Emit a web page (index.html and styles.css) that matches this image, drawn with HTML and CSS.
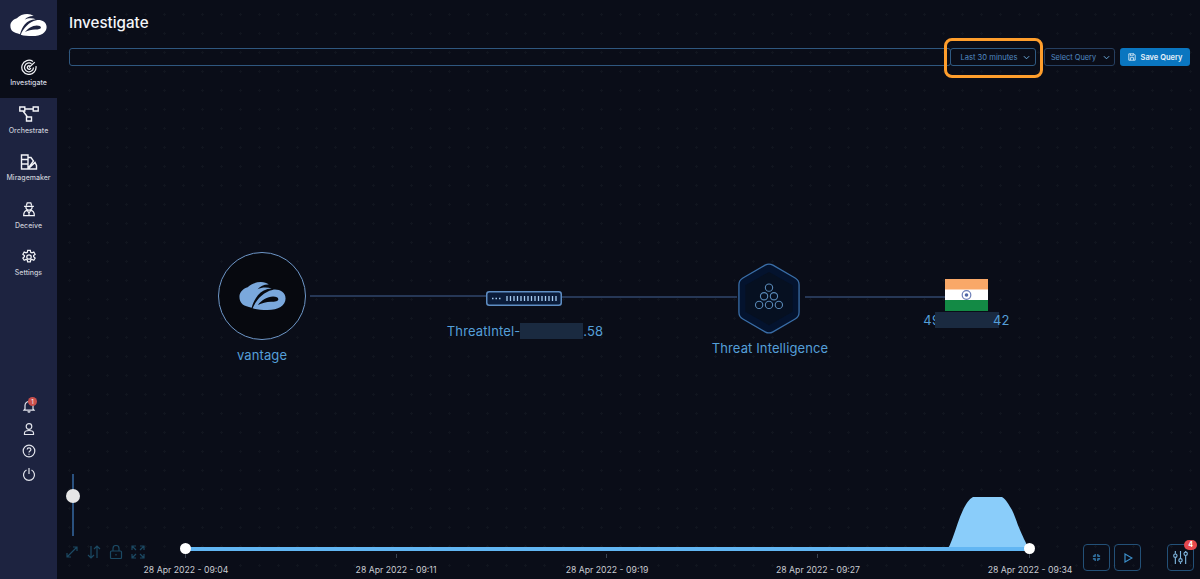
FILE: index.html
```html
<!DOCTYPE html>
<html lang="en">
<head>
<meta charset="utf-8">
<title>Investigate</title>
<link rel="stylesheet" href="styles.css">
</head>
<body>
<svg class="defs" width="0" height="0" aria-hidden="true">
  <defs>
    <symbol id="logo" viewBox="0 0 140 85">
      <path d="M0 45C0 30 12 20 25 16 35 6 50 0 65 0 75 0 83 3 90 8 76 7 64 12 55 22 68 15 85 15 98 20 80 21 66 28 56 40 48 50 42 62 37 78 26 74 16 73 10 68 3 62 0 55 0 45z"/>
      <path fill-rule="evenodd" d="M40 80C50 55 72 30 100 24 118 20 140 30 140 50 140 72 118 85 85 85 68 85 52 84 40 80zM56 70C68 64 82 60 96 60 108 60 118 58 118 52 118 47 112 44 102 44 85 44 66 56 56 70z"/>
    </symbol>
  </defs>
</svg>
<div class="app">
  <aside class="sidebar">
    <div class="brand"><svg class="brand-logo"><use href="#logo"/></svg></div>
    <nav class="nav">
      <a class="nav-item active">
        <svg class="nav-icon" viewBox="0 0 20 18"><path d="M14.500 2.800A8 8 0 1 0 17.800 8M12.800 5.300A5 5 0 1 0 15 9.500M10.800 7.700A2 2 0 1 0 12 10.200M10 9.500 16.500 3.500"/></svg>
        <span>Investigate</span>
      </a>
      <a class="nav-item">
        <svg class="nav-icon" viewBox="0 0 20 16"><path d="M.8 1h5v4h-5zM14.200 1h5v4h-5zM7.500 11h5v4h-5zM5.800 3h8.400M4 5l4.500 6"/></svg>
        <span>Orchestrate</span>
      </a>
      <a class="nav-item">
        <svg class="nav-icon" viewBox="0 0 20 16"><path d="M2.500 1h6.500v14H2.500zM2.500 5.500H9M2.500 10H9M9 3.500h3l2.500 3.500L9 14.500M9 15l7-6.500 1.500 3V15z"/></svg>
        <span>Miragemaker</span>
      </a>
      <a class="nav-item">
        <svg class="nav-icon" viewBox="0 0 20 18"><path d="M7 5 8 2h4l1 3M4.500 6h11M6.500 6.500c0 2.300 1.500 3.800 3.500 3.800s3.500-1.500 3.500-3.800M4 16.500c0-3.700 1.500-5.700 4-6l2 3 2-3c2.500.3 4 2.300 4 6zM10 13.500v3"/></svg>
        <span>Deceive</span>
      </a>
      <a class="nav-item">
        <svg class="nav-icon" viewBox="0 0 20 18"><circle cx="10" cy="9" r="2.500"/><path d="M8.500 1.500h3l.4 2.200 1.500.7 2-1 1.500 2.500-1.700 1.400v1.500l1.700 1.400-1.500 2.500-2-1-1.500.7-.4 2.100h-3l-.4-2.100-1.500-.7-2 1-1.500-2.500 1.700-1.400V7.300L3.100 5.900l1.500-2.500 2 1 1.500-.7z"/></svg>
        <span>Settings</span>
      </a>
    </nav>
    <div class="util">
      <div class="util-item">
        <svg class="util-icon" viewBox="0 0 14 14"><path d="M3 10V6.500a4 4 0 0 1 8 0V10l1 1.200H2zM5.800 12.300a1.300 1.300 0 0 0 2.400 0"/></svg>
        <span class="bell-badge">1</span>
      </div>
      <div class="util-item"><svg class="util-icon" viewBox="0 0 14 14"><circle cx="7" cy="4.500" r="2.800"/><path d="M2.500 12.500v-1.500c0-1.500 1.500-2.500 4.500-2.500s4.500 1 4.500 2.500v1.500z"/></svg></div>
      <div class="util-item"><svg class="util-icon" viewBox="0 0 14 14"><circle cx="7" cy="7" r="5.800"/><path d="M5.200 5.600C5.200 4.500 6 3.900 7 3.900s1.900.6 1.900 1.600C8.900 7 7 7 7 8.500M7 9.800v1"/></svg></div>
      <div class="util-item"><svg class="util-icon" viewBox="0 0 14 14"><path d="M4.500 3a5.500 5.500 0 1 0 5 0M7 1v6"/></svg></div>
    </div>
  </aside>

  <main class="main">
    <h1 class="title">Investigate</h1>
    <div class="query">
      <div class="query-input"></div>
      <div class="time-wrap">
        <button class="select time">Last 30 minutes<svg class="chev" viewBox="0 0 8 5"><path d="M1 1l3 3 3-3"/></svg></button>
      </div>
      <button class="select saved">Select Query<svg class="chev" viewBox="0 0 8 5"><path d="M1 1l3 3 3-3"/></svg></button>
      <button class="save">
        <svg class="save-icon" viewBox="0 0 10 10"><path d="M1 1h6.500L9 2.500V9H1zM3 1v2.500h3.500V1M3 9V5.800h4V9"/></svg>
        Save Query
      </button>
    </div>

    <section class="graph">
      <svg class="edges" width="1143" height="579">
        <path d="M253 296H430M505 297H680M748 297H888"/>
      </svg>

      <div class="node vantage">
        <div class="disc"><svg class="disc-logo"><use href="#logo"/></svg></div>
        <span class="node-label">vantage</span>
      </div>

      <div class="node intel-ip">
        <svg class="device" viewBox="0 0 76 15">
          <rect x=".75" y=".75" width="74.500" height="13.500" rx="2.500" class="dev-box"/>
          <path class="dev-dots" d="M6 7.500h1.500M9.500 7.500H11M13 7.500h1.500"/>
          <path class="dev-bars" d="M21 5v5M24.500 5v5M28 5v5M31.500 5v5M35 5v5M38.500 5v5M42 5v5M45.500 5v5M49 5v5M52.500 5v5M56 5v5M59.500 5v5M63 5v5M66.500 5v5M70 5v5"/>
        </svg>
        <span class="node-label ip-label">ThreatIntel-<span class="mask mask-a"></span>.58</span>
      </div>

      <div class="node intel">
        <svg class="hex" viewBox="0 0 64 72">
          <path class="hex-outer" d="M28 2.200a8 8 0 0 1 8 0l22.500 13a8 8 0 0 1 4 6.900v27.800a8 8 0 0 1-4 6.900l-22.500 13a8 8 0 0 1-8 0l-22.500-13a8 8 0 0 1-4-6.900V22.100a8 8 0 0 1 4-6.900z"/>
          <path class="hex-inner" d="M32 9 56 22.500v27L32 63 8 49.500v-27z"/>
          <g class="hex-dots">
            <circle cx="32" cy="25" r="3.700"/><circle cx="27" cy="33.700" r="3.700"/><circle cx="37" cy="33.700" r="3.700"/>
            <circle cx="22" cy="42.500" r="3.700"/><circle cx="32" cy="42.500" r="3.700"/><circle cx="42" cy="42.500" r="3.700"/>
          </g>
        </svg>
        <span class="node-label intel-label">Threat Intelligence</span>
      </div>

      <div class="node geo">
        <svg class="flag" viewBox="0 0 43 32">
          <rect width="43" height="11" fill="#f9a868"/>
          <rect y="10.500" width="43" height="11" fill="#fff"/>
          <rect y="21" width="43" height="11" fill="#138a45"/>
          <circle cx="21.500" cy="16" r="4.300" fill="none" stroke="#6d7fb8" stroke-width="1.200"/>
          <circle cx="21.500" cy="16" r="1.800" fill="#5066a6"/>
        </svg>
        <span class="node-label geo-label">49<span class="mask mask-b"></span>42</span>
      </div>
    </section>

    <div class="zoom-rail"><span class="zoom-knob"></span></div>
    <div class="tools">
      <svg class="tool" viewBox="0 0 14 14"><path d="M2 12 12 2M8 2h4v4M2 8v4h4"/></svg>
      <svg class="tool" viewBox="0 0 14 14"><path d="M4 1v12M1 10l3 3 3-3M10 13V1M7 4l3-3 3 3"/></svg>
      <svg class="tool" viewBox="0 0 14 14"><rect x="1.500" y="6" width="11" height="7.500" rx="1"/><path d="M4 6V3.500a3 3 0 0 1 6 0V6M7 9v1.500"/></svg>
      <svg class="tool" viewBox="0 0 14 14"><path d="M1 5V1h4M1 1l4 4M13 5V1H9M13 1 9 5M1 9v4h4M1 13l4-4M13 9v4H9M13 13 9 9"/></svg>
    </div>

    <section class="timeline">
      <svg class="peak" viewBox="0 0 86 54"><path d="M0 54C4 52 6 45 8 40 11 32 14 21 18 13 21 7 24 2 28 0H57C61 2 64 8 67 13 70 19 72 26 75 33 78 40 80 44 83 50L86 54z"/></svg>
      <div class="track"></div>
      <span class="thumb thumb-l"></span>
      <span class="thumb thumb-r"></span>
      <span class="tick t1"></span><span class="tick t2"></span><span class="tick t3"></span><span class="tick t4"></span><span class="tick t5"></span>
      <span class="stamp s1">28 Apr 2022 - 09:04</span>
      <span class="stamp s2">28 Apr 2022 - 09:11</span>
      <span class="stamp s3">28 Apr 2022 - 09:19</span>
      <span class="stamp s4">28 Apr 2022 - 09:27</span>
      <span class="stamp s5">28 Apr 2022 - 09:34</span>
    </section>

    <div class="controls">
      <button class="ctrl">
        <svg class="ctrl-icon" viewBox="0 0 10 10"><path d="M3.500 1v2.500H1M6.500 1v2.500H9M3.500 9V6.500H1M6.500 9V6.500H9"/></svg>
      </button>
      <button class="ctrl">
        <svg class="ctrl-icon play" viewBox="0 0 10 10"><path d="M2 1v8l7-4z"/></svg>
      </button>
      <button class="ctrl filter">
        <svg class="ctrl-icon mixer" viewBox="0 0 16 16"><path d="M2.500 1v3M2.500 8v7M8 1v8M8 13v2M13.500 1v1M13.500 6v9"/><circle cx="2.500" cy="6" r="1.800"/><circle cx="8" cy="11" r="1.800"/><circle cx="13.500" cy="4" r="1.800"/></svg>
        <span class="filter-badge">4</span>
      </button>
    </div>
  </main>
</div>
</body>
</html>
```
FILE: styles.css
```css
* { box-sizing: border-box; }
html, body { margin: 0; height: 100%; }
body {
  width: 1200px;
  height: 579px;
  overflow: hidden;
  background: #0a0d18;
  font-family: Inter, "Liberation Sans", sans-serif;
  color: #fff;
}
.defs { position: absolute; }
.app { display: flex; height: 579px; }

/* Sidebar */
.sidebar {
  width: 57px;
  flex: none;
  display: flex;
  flex-direction: column;
  background: #1d2340;
}
.brand { height: 50px; display: flex; align-items: center; justify-content: center; }
.brand-logo { width: 37px; height: 22px; fill: #fff; }
.nav { display: flex; flex-direction: column; }
.nav-item {
  height: 47.500px;
  display: flex;
  flex-direction: column;
  align-items: center;
  padding-top: 8.500px;
  gap: 3.500px;
  font-size: 7px;
  line-height: 9px;
  font-weight: 500;
  color: #c9ccd6;
  white-space: nowrap;
}
.nav-item.active { background: #0a0d18; color: #d6d9e2; }
.nav-icon { width: 20px; height: 16px; fill: none; stroke: #f2f3f7; stroke-width: 1.400; }
.util { margin-top: auto; margin-bottom: 97px; display: flex; flex-direction: column; align-items: center; gap: 6.700px; }
.util-item { position: relative; width: 16px; height: 16px; display: flex; align-items: center; justify-content: center; }
.util-icon { width: 14px; height: 14px; fill: none; stroke: #e2e4ec; stroke-width: 1.200; }
.bell-badge {
  position: absolute;
  top: -.5px;
  right: -.5px;
  width: 9px;
  height: 9px;
  border-radius: 50%;
  background: #c9504d;
  font-size: 6px;
  line-height: 9px;
  text-align: center;
  color: #fff;
}

/* Main */
.main {
  position: relative;
  flex: 1;
  padding: 0 10px 0 12px;
  background-color: #0a0d18;
  background-image: radial-gradient(circle, #11151f 1px, transparent 1.300px);
  background-size: 19px 19px;
  background-position: 3px 5px;
}
.title { margin: 0; padding-top: 13px; height: 48px; font-size: 15.200px; font-weight: 500; line-height: 20px; color: #f4f5f8; }
.query { display: flex; align-items: center; height: 18px; }
.query-input { flex: 1; height: 18px; border: 1px solid #2f577f; border-radius: 3px; margin-right: -1px; }
.time-wrap {
  position: relative;
  display: flex;
  z-index: 1;
}
.time-wrap::after {
  content: "";
  position: absolute;
  inset: -10px -7px -12px -6px;
  border: 3px solid #ff9e2c;
  border-radius: 8px;
  background: transparent;
}
.select {
  height: 18px;
  display: flex;
  align-items: center;
  justify-content: center;
  background: #0a0d18;
  border: 1px solid #2f5a82;
  border-radius: 3px;
  color: #5189c0;
  font: 400 7.600px Inter, "Liberation Sans", sans-serif;
  white-space: nowrap;
  padding: 0;
}
.time { width: 86px; gap: 5px; padding-left: 4px; }
.saved { width: 71px; gap: 7px; margin-left: 8px; padding-left: 2px; border-color: #263f60; font-size: 7.400px; }
.chev { width: 7px; height: 5px; fill: none; stroke: #6fb0e3; stroke-width: 1.100; }
.save {
  width: 70px;
  height: 18px;
  margin-left: 5px;
  display: flex;
  align-items: center;
  justify-content: center;
  gap: 5px;
  padding: 0;
  border: 0;
  border-radius: 3px;
  background: #0a76c0;
  color: #e8f2fa;
  font: 600 7.500px Inter, "Liberation Sans", sans-serif;
  white-space: nowrap;
}
.save-icon { width: 8px; height: 8px; fill: none; stroke: #e8f2fa; stroke-width: 1; }

/* Graph canvas */
.graph { position: absolute; inset: 0; pointer-events: none; }
.edges { position: absolute; left: 0; top: 0; }
.edges path { fill: none; stroke: #31456b; stroke-width: 1.500; }
.node { position: absolute; display: flex; flex-direction: column; align-items: center; }
.node-label { font-size: 13px; line-height: 17px; color: #559fd8; white-space: nowrap; letter-spacing: .12px; }
.vantage { left: 161px; top: 252px; width: 88px; }
.disc {
  width: 88px;
  height: 88px;
  border-radius: 50%;
  border: 1.500px solid #6e97c8;
  background: #07090f;
  display: flex;
  align-items: center;
  justify-content: center;
  margin-bottom: 7px;
}
.disc-logo { width: 47px; height: 28px; fill: #7aa8dc; }
.intel-ip { left: 389px; top: 291px; width: 156px; }
.device { width: 76px; height: 15px; margin-bottom: 17px; }
.ip-label { margin-left: 2px; }
.dev-box { fill: #0b1c3a; stroke: #5f8ec4; stroke-width: 1.500; }
.dev-dots, .dev-bars { fill: none; stroke: #a6cbf0; stroke-width: 1.500; }
.dev-bars { stroke-width: 1.300; }
.mask { display: inline-block; height: 16px; background: #1a2a40; vertical-align: -3px; }
.mask-a { width: 63px; }
.intel { left: 652px; top: 263px; width: 120px; }
.hex { width: 64px; height: 71px; margin-bottom: 6px; }
.intel-label { margin-left: 2px; }
.hex-outer { fill: #04132e; stroke: #3a6ea8; stroke-width: 1.300; }
.hex-inner { fill: #061021; }
.hex-dots circle { fill: none; stroke: #5a8ab8; stroke-width: 1.100; }
.geo { left: 867px; top: 279px; width: 85px; }
.flag { width: 43px; height: 32px; display: block; }
.geo-label { margin-top: 1px; }
.mask-b { width: 64px; margin: 0 -5.500px; }

/* Zoom */
.zoom-rail { position: absolute; left: 15px; top: 474px; width: 2px; height: 62px; background: #2a517f; }
.zoom-knob {
  position: absolute;
  left: -6px;
  top: 15px;
  width: 14px;
  height: 14px;
  border-radius: 50%;
  background: #e6e6e6;
}
.tools { position: absolute; left: 8px; top: 545px; display: flex; gap: 8px; }
.tool { width: 14px; height: 14px; fill: none; stroke: #1b4963; stroke-width: 1.200; }

/* Timeline */
.timeline { position: absolute; left: 0; right: 0; top: 490px; height: 89px; }
.peak { position: absolute; left: 888px; top: 7px; width: 86px; height: 54px; fill: #8acdfa; }
.track { position: absolute; left: 128px; right: 170px; top: 57px; height: 4px; background: #62b6f3; border-radius: 2px; }
.thumb {
  position: absolute;
  top: 53px;
  width: 11px;
  height: 11px;
  border-radius: 50%;
  background: #fff;
}
.thumb-l { left: 123px; }
.thumb-r { left: 967px; }
.tick { position: absolute; top: 64px; width: 1px; height: 4px; background: #3a4250; }
.t1 { left: 128px; } .t2 { left: 339px; } .t3 { left: 549px; } .t4 { left: 760px; } .t5 { left: 972px; }
.stamp { position: absolute; top: 75px; width: 120px; margin-left: -60px; text-align: center; font-size: 8.700px; line-height: 11px; color: #c9cbd1; white-space: nowrap; }
.s1 { left: 129px; } .s2 { left: 339px; } .s3 { left: 550px; } .s4 { left: 761px; } .s5 { left: 973px; }

/* Controls */
.controls { position: absolute; left: 1026px; top: 544px; display: flex; gap: 4px; }
.ctrl {
  position: relative;
  width: 27px;
  height: 27px;
  padding: 0;
  display: flex;
  align-items: center;
  justify-content: center;
  border: 1px solid #235077;
  border-radius: 4px;
  background: transparent;
}
.filter { margin-left: 22px; }
.ctrl-icon { width: 9px; height: 9px; fill: none; stroke: #3c8fca; stroke-width: 1.200; }
.play { width: 10px; height: 10px; }
.mixer { width: 15px; height: 15px; stroke: #7fb6df; }
.filter-badge {
  position: absolute;
  top: -5px;
  right: -4px;
  width: 13px;
  height: 10px;
  border-radius: 5px;
  background: #e5484d;
  font: 700 7px/10px Inter, "Liberation Sans", sans-serif;
  color: #fff;
  text-align: center;
}
```
